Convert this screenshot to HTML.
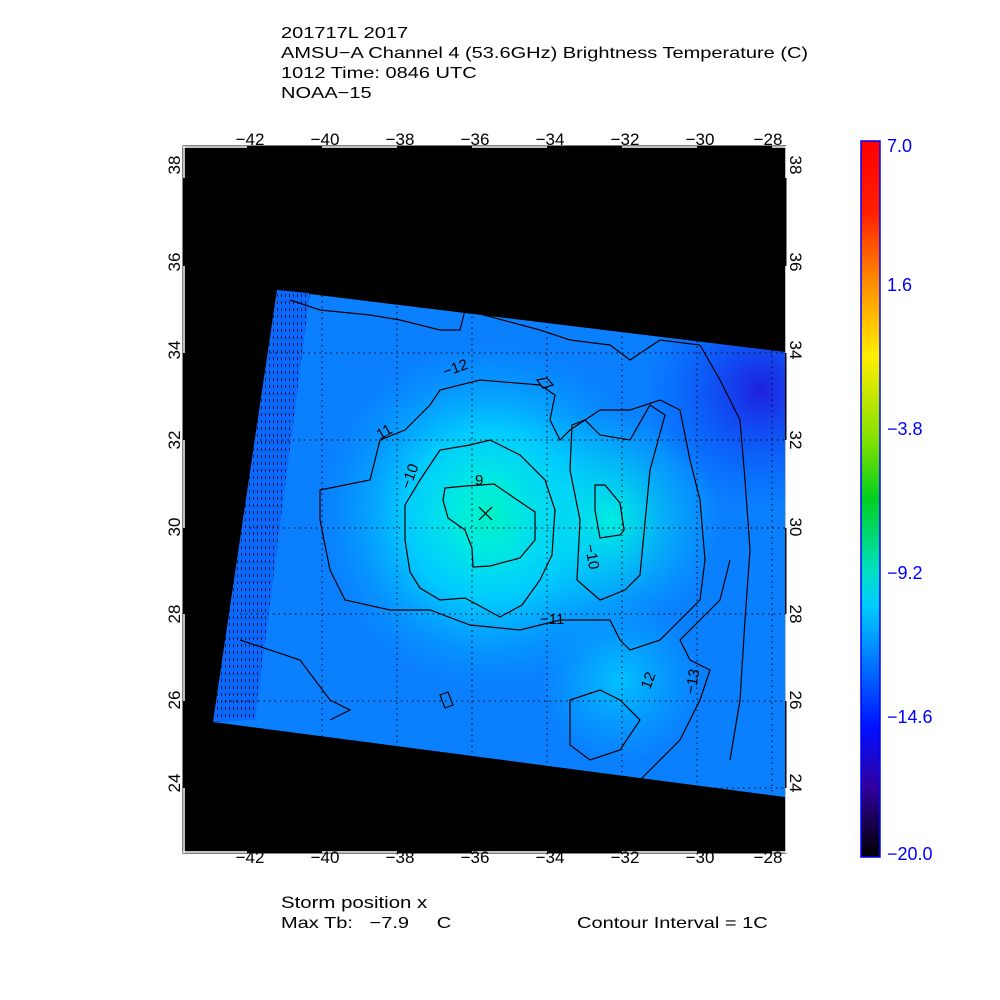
<!DOCTYPE html>
<html><head><style>
body{margin:0;background:#fff;width:1000px;height:1000px;overflow:hidden;position:relative;font-family:"Liberation Sans",sans-serif;}
.t{position:absolute;left:281px;font-size:16px;color:#000;line-height:20px;transform:scaleX(1.25);transform-origin:0 0;white-space:nowrap;}
</style></head><body>
<div class="t" style="top:24px">201717L 2017<br>AMSU−A Channel 4 (53.6GHz) Brightness Temperature (C)<br>1012 Time: 0846 UTC<br>NOAA−15</div>
<div class="t" style="top:893px;font-size:17px;transform:scaleX(1.2)">Storm position x</div>
<div class="t" style="top:914px">Max Tb:&nbsp;&nbsp;&nbsp;−7.9&nbsp;&nbsp;&nbsp;&nbsp;&nbsp;C</div>
<div class="t" style="top:914px;left:577px">Contour Interval = 1C</div>
<svg width="1000" height="1000" style="position:absolute;left:0;top:0" font-family="Liberation Sans" font-size="17">
<defs>
<radialGradient id="g1" cx="490" cy="515" r="170" gradientUnits="userSpaceOnUse">
<stop offset="0" stop-color="#00f0c8"/><stop offset="0.2" stop-color="#00eae0"/><stop offset="0.5" stop-color="#00d8ff" stop-opacity="0.85"/><stop offset="1" stop-color="#00a8ff" stop-opacity="0"/></radialGradient>
<radialGradient id="g2" cx="610" cy="520" r="110" gradientUnits="userSpaceOnUse">
<stop offset="0" stop-color="#00eee0"/><stop offset="1" stop-color="#00c8ff" stop-opacity="0"/></radialGradient>
<radialGradient id="g4" cx="620" cy="680" r="80" gradientUnits="userSpaceOnUse">
<stop offset="0" stop-color="#00d0ff" stop-opacity="0.8"/><stop offset="1" stop-color="#00c0ff" stop-opacity="0"/></radialGradient>
<radialGradient id="g3" cx="760" cy="390" r="120" gradientUnits="userSpaceOnUse">
<stop offset="0" stop-color="#2020e0"/><stop offset="1" stop-color="#0050ff" stop-opacity="0"/></radialGradient>
<linearGradient id="cb" x1="0" y1="0" x2="0" y2="1">
<stop offset="0" stop-color="#ff0000"/><stop offset="0.1" stop-color="#ff2000"/><stop offset="0.2" stop-color="#ff9000"/><stop offset="0.3" stop-color="#ffee00"/><stop offset="0.42" stop-color="#80e000"/><stop offset="0.5" stop-color="#00d020"/><stop offset="0.6" stop-color="#00e0c0"/><stop offset="0.65" stop-color="#00ccff"/><stop offset="0.75" stop-color="#0060ff"/><stop offset="0.82" stop-color="#0010ff"/><stop offset="0.9" stop-color="#3000a0"/><stop offset="1" stop-color="#000000"/></linearGradient>
<pattern id="hat" width="4" height="7" patternUnits="userSpaceOnUse"><rect width="4" height="7" fill="#0a60ff"/><rect x="1" y="0" width="1" height="3" fill="#000"/></pattern>
</defs>
<rect x="183" y="146" width="603" height="707" fill="#000"/>
<polygon points="277,290 785,352 785,797 213,722" fill="#0a80ff"/>
<polygon points="277,290 785,352 785,797 213,722" fill="url(#g3)"/>
<polygon points="277,290 785,352 785,797 213,722" fill="url(#g1)"/>
<polygon points="277,290 785,352 785,797 213,722" fill="url(#g2)"/>
<polygon points="277,290 785,352 785,797 213,722" fill="url(#g4)"/>
<polygon points="277,290 310,293 255,720 213,722" fill="url(#hat)" opacity="0.75"/>
<g stroke="#000" stroke-dasharray="1.5,4" stroke-width="1">
<line x1="322" y1="290" x2="322" y2="740"/><line x1="397" y1="290" x2="397" y2="750"/><line x1="472" y1="300" x2="472" y2="760"/><line x1="547" y1="310" x2="547" y2="770"/><line x1="622" y1="320" x2="622" y2="780"/><line x1="697" y1="330" x2="697" y2="790"/><line x1="772" y1="350" x2="772" y2="795"/>
<line x1="270" y1="353" x2="785" y2="353"/><line x1="260" y1="440" x2="785" y2="440"/><line x1="250" y1="528" x2="785" y2="528"/><line x1="240" y1="614" x2="785" y2="614"/><line x1="225" y1="701" x2="785" y2="701"/><line x1="600" y1="788" x2="785" y2="788"/>
</g>
<g fill="none" stroke="#000" stroke-width="1.2">
<path d="M420,480 L440,450 L470,445 L490,440 L520,455 L545,480 L555,510 L552,555 L540,580 L522,605 L500,617 L465,598 L440,600 L420,588 L410,572 L405,540 L405,505 Z"/>
<path d="M445,488 L465,486 L480,485 L494,484 L510,495 L535,512 L535,540 L520,558 L490,566 L473,567 L472,548 L465,530 L448,518 L443,500 Z"/>
<path d="M595,485 L605,485 L620,503 L624,530 L620,535 L600,538 L595,510 Z"/>
<path d="M572,425 L585,420 L600,435 L630,440 L650,405 L665,415 L650,470 L640,575 L625,590 L600,600 L577,580 L580,520 L570,470 Z"/>
<path d="M320,490 L370,480 L380,440 L405,430 L430,405 L440,390 L480,380 L540,385 L555,395 L550,420 L560,440 L570,430 L600,410 L630,410 L660,400 L680,410 L690,460 L700,500 L705,560 L700,600 L680,620 L660,640 L630,650 L620,640 L610,620 L560,620 L520,630 L470,625 L430,610 L390,610 L345,600 L330,570 L320,520 Z"/>
<path d="M290,300 L320,310 L370,315 L400,320 L440,330 L460,330 L465,310 L540,330 L570,340 L610,345 L630,360 L660,340 L700,345 L720,380 L740,420 L745,480 L750,550 L745,620 L740,700 L730,760"/>
<path d="M240,640 L300,660 L330,700 L350,710 L330,720"/>
<path d="M570,700 L600,690 L620,700 L640,720 L620,750 L590,760 L570,745 Z"/>
<path d="M640,780 L680,740 L700,700 L710,670 L690,660 L680,640 L700,620 L720,600 L730,560"/>
<path d="M440,695 L448,692 L453,705 L445,708 Z"/>
<path d="M537,380 L547,378 L553,385 L543,388 Z"/>
</g>
<g stroke="#000" stroke-width="1.2"><line x1="479" y1="507" x2="492" y2="520"/><line x1="492" y1="507" x2="479" y2="520"/></g>
<g font-size="15" fill="#000"><text x="445" y="377" transform="rotate(-20 445 377)">−12</text><text x="380" y="440" transform="rotate(-30 380 440)">11</text><text x="410" y="490" transform="rotate(-70 410 490)">−10</text><text x="475" y="485">9</text><text x="585" y="545" transform="rotate(80 585 545)">−10</text><text x="540" y="624">−11</text><text x="650" y="690" transform="rotate(-70 650 690)">12</text><text x="695" y="695" transform="rotate(-80 695 695)">−13</text></g>
<rect x="183" y="146" width="603" height="707" fill="none" stroke="#000" stroke-width="1"/>
<g stroke="#fff" stroke-width="1.5"><line x1="183" y1="147" x2="247" y2="147"/><line x1="322" y1="147" x2="397" y2="147"/><line x1="472" y1="147" x2="547" y2="147"/><line x1="622" y1="147" x2="697" y2="147"/><line x1="772" y1="147" x2="786" y2="147"/>
<line x1="183" y1="852" x2="247" y2="852"/><line x1="322" y1="852" x2="397" y2="852"/><line x1="472" y1="852" x2="547" y2="852"/><line x1="622" y1="852" x2="697" y2="852"/><line x1="772" y1="852" x2="786" y2="852"/>
<line x1="184" y1="146" x2="184" y2="178"/><line x1="184" y1="266" x2="184" y2="353"/><line x1="184" y1="440" x2="184" y2="528"/><line x1="184" y1="614" x2="184" y2="701"/><line x1="184" y1="788" x2="184" y2="853"/>
<line x1="786" y1="146" x2="786" y2="178"/><line x1="786" y1="266" x2="786" y2="353"/><line x1="786" y1="440" x2="786" y2="528"/><line x1="786" y1="614" x2="786" y2="701"/><line x1="786" y1="788" x2="786" y2="853"/></g>
<g text-anchor="middle" fill="#000">
<text x="250" y="145">−42</text><text x="325" y="145">−40</text><text x="400" y="145">−38</text><text x="475" y="145">−36</text><text x="550" y="145">−34</text><text x="625" y="145">−32</text><text x="700" y="145">−30</text><text x="768" y="145">−28</text>
<text x="250" y="863">−42</text><text x="325" y="863">−40</text><text x="400" y="863">−38</text><text x="475" y="863">−36</text><text x="550" y="863">−34</text><text x="625" y="863">−32</text><text x="700" y="863">−30</text><text x="768" y="863">−28</text>
</g>
<g text-anchor="middle" fill="#000">
<text transform="translate(180,165) rotate(-90)">38</text><text transform="translate(180,262) rotate(-90)">36</text><text transform="translate(180,350) rotate(-90)">34</text><text transform="translate(180,440) rotate(-90)">32</text><text transform="translate(180,527) rotate(-90)">30</text><text transform="translate(180,614) rotate(-90)">28</text><text transform="translate(180,700) rotate(-90)">26</text><text transform="translate(180,783) rotate(-90)">24</text>
<text transform="translate(790,165) rotate(90)">38</text><text transform="translate(790,262) rotate(90)">36</text><text transform="translate(790,350) rotate(90)">34</text><text transform="translate(790,440) rotate(90)">32</text><text transform="translate(790,527) rotate(90)">30</text><text transform="translate(790,614) rotate(90)">28</text><text transform="translate(790,700) rotate(90)">26</text><text transform="translate(790,783) rotate(90)">24</text>
</g>
<rect x="861" y="141" width="19" height="716" fill="url(#cb)" stroke="#0000ff" stroke-width="1.5"/>
<g fill="#0000ff" font-size="18"><text x="887" y="152">7.0</text><text x="887" y="291">1.6</text><text x="887" y="435">−3.8</text><text x="887" y="579">−9.2</text><text x="887" y="723">−14.6</text><text x="887" y="860">−20.0</text></g>
</svg>
</body></html>
